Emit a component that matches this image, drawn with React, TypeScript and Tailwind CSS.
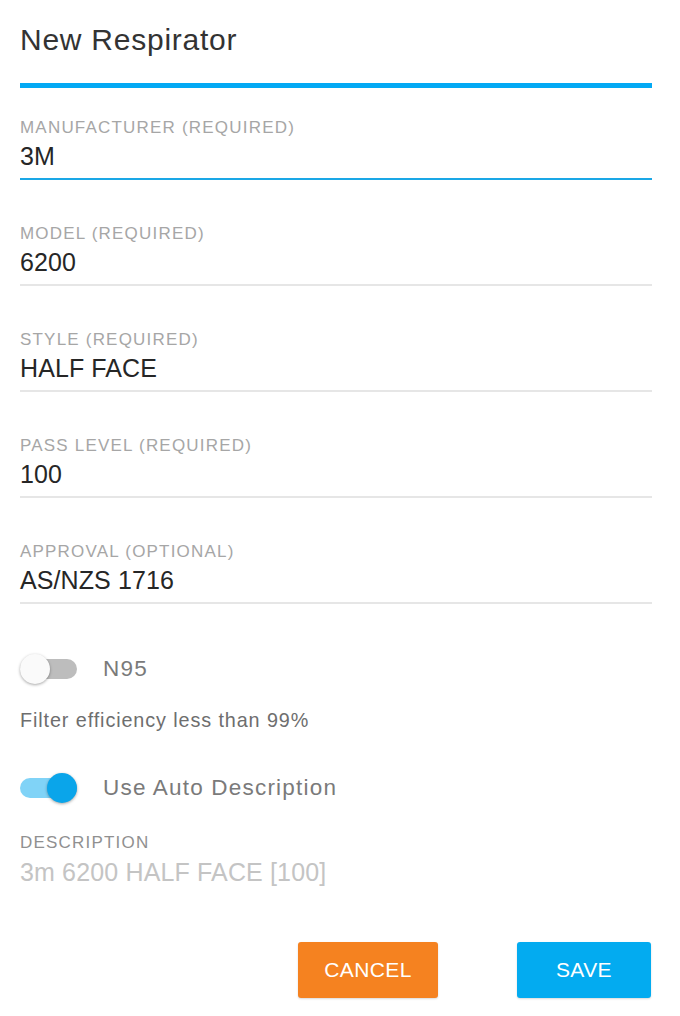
import React from "react";

function Label({ children, dark }: { children: React.ReactNode; dark?: boolean }) {
  return (
    <div className={"text-[17px] leading-[19px] tracking-[1.2px] " + (dark ? "text-[#909090]" : "text-[#a6a6a6]")}>
      {children}
    </div>
  );
}

function Field({ label, value, active }: { label: string; value: string; active?: boolean }) {
  return (
    <div className="mt-[43.5px] first:mt-0">
      <Label>{label}</Label>
      <div
        className={
          "mt-[4.5px] pb-[7px] text-[25px] leading-[30px] tracking-[0.1px] text-[#262626] border-b-2 " +
          (active ? "border-[#1aa7e6]" : "border-[#e6e6e6]")
        }
      >
        {value}
      </div>
    </div>
  );
}

function Toggle({ on }: { on: boolean }) {
  return (
    <div className="relative w-[57px] h-[30px] flex items-center shrink-0">
      <div className={"w-[57px] h-[20px] rounded-full " + (on ? "bg-[#80d3f7]" : "bg-[#bdbdbd]")} />
      <div
        className={
          "absolute top-0 w-[30px] h-[30px] rounded-full shadow-[0_1px_3px_rgba(0,0,0,0.35)] " +
          (on ? "left-[27px] bg-[#0aa5ea]" : "left-0 bg-[#fafafa]")
        }
      />
    </div>
  );
}

export default function App() {
  return (
    <div
      className="w-[680px] h-[1016px] bg-white"
      style={{ fontFamily: "'Liberation Sans', Arial, sans-serif" }}
    >
      <div className="ml-[20px] w-[632px] pt-[22px]">
        <h1 className="text-[30px] leading-[36px] tracking-[0.75px] text-[#333] font-normal">New Respirator</h1>
        <div className="mt-[25px] h-[5px] bg-[#03a9f4]" />
        <div className="mt-[29.5px]">
          <Field label="MANUFACTURER (REQUIRED)" value="3M" active />
          <Field label="MODEL (REQUIRED)" value="6200" />
          <Field label="STYLE (REQUIRED)" value="HALF FACE" />
          <Field label="PASS LEVEL (REQUIRED)" value="100" />
          <Field label="APPROVAL (OPTIONAL)" value="AS/NZS 1716" />
        </div>
        <div className="mt-[50px] flex items-center h-[30px]">
          <Toggle on={false} />
          <span className="ml-[26px] text-[22.5px] leading-[26px] tracking-[1.2px] text-[#7a7a7a]">N95</span>
        </div>
        <div className="mt-[24px] text-[19.8px] leading-[24px] tracking-[0.9px] text-[#6e6e6e]">
          Filter efficiency less than 99%
        </div>
        <div className="mt-[41px] flex items-center h-[30px]">
          <Toggle on={true} />
          <span className="ml-[26px] text-[22.5px] leading-[26px] tracking-[1.2px] text-[#7a7a7a]">Use Auto Description</span>
        </div>
        <div className="mt-[30px]">
          <Label dark>DESCRIPTION</Label>
          <div className="mt-[4.5px] text-[25px] leading-[30px] tracking-[0.15px] text-[#c4c4c4]">3m 6200 HALF FACE [100]</div>
        </div>
        <div className="mt-[55px] flex justify-end gap-[79px] pr-[1px]">
          <button className="w-[140px] h-[56px] rounded-[3px] bg-[#f58220] text-white text-[21px] tracking-[0.4px] shadow-[0_1px_2px_rgba(0,0,0,0.15)]">
            CANCEL
          </button>
          <button className="w-[134px] h-[56px] rounded-[3px] bg-[#03abf0] text-white text-[21px] tracking-[0.4px] shadow-[0_1px_2px_rgba(0,0,0,0.15)]">
            SAVE
          </button>
        </div>
      </div>
    </div>
  );
}
